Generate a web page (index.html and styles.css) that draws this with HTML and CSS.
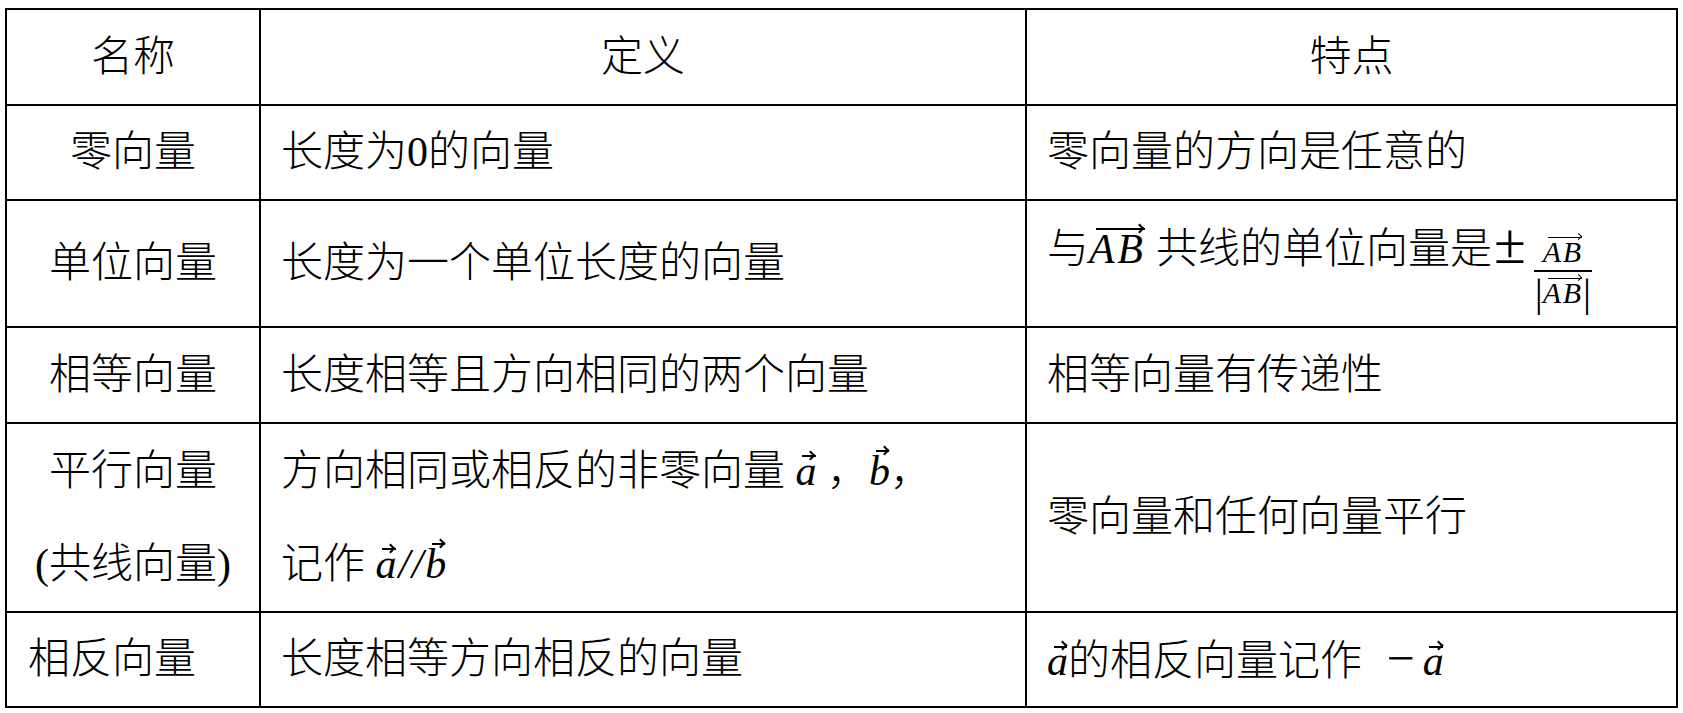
FILE: index.html
```html
<!DOCTYPE html>
<html lang="zh-CN">
<head>
<meta charset="utf-8">
<title>向量的概念</title>
<link rel="stylesheet" href="styles.css">
</head>
<body>
<div class="tbl" role="table">
  <div class="c ctr" role="columnheader">名称</div>
  <div class="c ctr" role="columnheader">定义</div>
  <div class="c ctr" role="columnheader">特点</div>

  <div class="c ctr" role="cell">零向量</div>
  <div class="c" role="cell">长度为0的向量</div>
  <div class="c" role="cell">零向量的方向是任意的</div>

  <div class="c ctr" role="cell">单位向量</div>
  <div class="c" role="cell">长度为一个单位长度的向量</div>
  <div class="c" role="cell"><span>与<span class="m vec hi ab">AB</span> 共线的单位向量是<span class="pm">±</span><span class="frac"><span class="num"><span class="m vec hi ab">AB</span></span><span class="den"><span class="bar">|</span><span class="m vec hi ab">AB</span><span class="bar">|</span></span></span></span></div>

  <div class="c ctr" role="cell">相等向量</div>
  <div class="c" role="cell">长度相等且方向相同的两个向量</div>
  <div class="c" role="cell">相等向量有传递性</div>

  <div class="c ctr two" role="cell"><span>平行向量<br>(共线向量)</span></div>
  <div class="c two" role="cell"><span>方向相同或相反的非零向量 <span class="m vec lo">a</span> ，<span class="m vec hi">b</span>，<br>记作 <span class="m vec lo">a</span><span class="m sl">//</span><span class="m vec hi">b</span></span></div>
  <div class="c" role="cell">零向量和任何向量平行</div>

  <div class="c left1" role="cell">相反向量</div>
  <div class="c" role="cell">长度相等方向相反的向量</div>
  <div class="c" role="cell"><span><span class="m vec lo">a</span>的相反向量记作 <span class="minus">−</span><span class="m vec lo">a</span></span></div>
</div>
</body>
</html>
```

FILE: styles.css
```css
html, body {
  margin: 0;
  padding: 0;
  background: #ffffff;
}

body {
  font-family: "Liberation Serif", "Noto Sans CJK SC", serif;
  font-size: 42px;
  font-weight: 300;
  color: #000000;
}

.tbl {
  display: grid;
  grid-template-columns: 252px 764px 649px;
  grid-template-rows: 94px 93px 125px 94px 187px 93px;
  gap: 2px;
  padding: 2px;
  background: #000000;
  width: max-content;
  margin: 8px 0 0 5px;
}

.c {
  background: #ffffff;
  display: flex;
  align-items: center;
  padding-left: 20px;
  white-space: nowrap;
  line-height: 1.2;
}

.ctr {
  justify-content: center;
  padding-left: 0;
  text-align: center;
}

.left1 {
  padding-left: 21px;
}

.two {
  line-height: 93px;
}

.m {
  font-family: "Liberation Serif", serif;
  font-style: italic;
  font-weight: 400;
}

.ab {
  letter-spacing: 0.06em;
}

.sl {
  letter-spacing: 0.04em;
  margin-left: 2px;
}

.vec {
  position: relative;
  display: inline-block;
  line-height: 1;
}

.vec::before {
  content: "";
  position: absolute;
  left: 0.16em;
  right: 0.02em;
  top: var(--at);
  border-top: 0.05em solid #000;
}

.vec::after {
  content: "";
  position: absolute;
  right: 0.05em;
  top: calc(var(--at) - 0.09em);
  width: 0.17em;
  height: 0.17em;
  border-top: 0.05em solid #000;
  border-right: 0.05em solid #000;
  transform: rotate(45deg);
  box-sizing: border-box;
}

.vec.hi {
  --at: 0.02em;
}

.vec.lo {
  --at: 0.14em;
}

.pm {
  font-family: "Liberation Serif", serif;
  font-weight: 400;
  font-size: 58px;
  line-height: 1;
  margin-left: 2px;
}

.minus {
  font-family: "Liberation Serif", serif;
  font-weight: 400;
  font-size: 50px;
  line-height: 1;
  margin: 0 8px 0 14px;
}

.frac {
  display: inline-flex;
  flex-direction: column;
  align-items: center;
  font-size: 30px;
  line-height: 1;
  margin-left: 8px;
  vertical-align: 1px;
}

.num {
  display: block;
  border-bottom: 2px solid #000;
  padding: 0 9px 3px;
}

.den {
  display: flex;
  align-items: center;
  padding-top: 1px;
}

.bar {
  font-family: "Liberation Serif", serif;
  font-weight: 400;
  font-size: 40px;
  line-height: 1;
}
```
